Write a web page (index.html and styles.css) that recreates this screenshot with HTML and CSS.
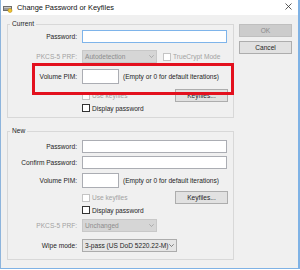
FILE: index.html
```html
<!DOCTYPE html>
<html>
<head>
  <title>Change Password or Keyfiles</title>
  <link rel="stylesheet" href="styles.css">
</head>
<body>
  <div class="window">
    <div class="titlebar">
      <svg class="app-icon" width="10" height="9" viewBox="0 0 10 9">
        <rect x="0.5" y="2.5" width="8" height="4" fill="#9a9a9a" stroke="#6e6e6e"/>
        <rect x="1" y="3" width="7" height="1" fill="#c8c8c8"/>
        <circle cx="7" cy="6.5" r="2" fill="#f2c530" stroke="#b8901c" stroke-width="0.6"/>
      </svg>
      <span class="title">Change Password or Keyfiles</span>
      <svg class="close" width="7" height="7" viewBox="0 0 7 7">
        <path d="M0.5 0.5 L6.5 6.5 M6.5 0.5 L0.5 6.5" stroke="#333" stroke-width="0.8"/>
      </svg>
    </div>

    <div class="client">
      <div class="groups">
        <fieldset class="group group-current">
          <legend>Current</legend>
          <div class="row row-pass">
            <span class="lbl">Password:</span>
            <span class="input input-wide input-focus"></span>
          </div>
          <div class="row row-prf">
            <span class="lbl disabled">PKCS-5 PRF:</span>
            <span class="select select-prf select-disabled">Autodetection
              <svg class="chev" width="5" height="3" viewBox="0 0 5 3"><path d="M0.3 0.3 L2.5 2.5 L4.7 0.3" fill="none" stroke="#9a9a9a" stroke-width="0.7"/></svg>
            </span>
            <span class="check check-disabled check-tc"></span>
            <span class="check-text disabled">TrueCrypt Mode</span>
          </div>
          <div class="row row-pim highlighted">
            <span class="lbl">Volume PIM:</span>
            <span class="input input-pim"></span>
            <span class="pim-note">(Empty or 0 for default iterations)</span>
          </div>
          <div class="row row-keyfiles">
            <span class="lbl"></span>
            <span class="check check-disabled"></span>
            <span class="check-text disabled">Use keyfiles</span>
            <span class="btn btn-keyfiles">Keyfiles...</span>
          </div>
          <div class="row row-display">
            <span class="lbl"></span>
            <span class="check"></span>
            <span class="check-text">Display password</span>
          </div>
        </fieldset>

        <fieldset class="group group-new">
          <legend>New</legend>
          <div class="row row-newpass">
            <span class="lbl">Password:</span>
            <span class="input input-wide"></span>
          </div>
          <div class="row row-confirm">
            <span class="lbl">Confirm Password:</span>
            <span class="input input-wide"></span>
          </div>
          <div class="row row-newpim">
            <span class="lbl">Volume PIM:</span>
            <span class="input input-pim"></span>
            <span class="pim-note">(Empty or 0 for default iterations)</span>
          </div>
          <div class="row row-newkeyfiles">
            <span class="lbl"></span>
            <span class="check check-disabled"></span>
            <span class="check-text disabled">Use keyfiles</span>
            <span class="btn btn-keyfiles">Keyfiles...</span>
          </div>
          <div class="row row-newdisplay">
            <span class="lbl"></span>
            <span class="check"></span>
            <span class="check-text">Display password</span>
          </div>
          <div class="row row-newprf">
            <span class="lbl disabled">PKCS-5 PRF:</span>
            <span class="select select-prf select-disabled">Unchanged
              <svg class="chev" width="5" height="3" viewBox="0 0 5 3"><path d="M0.3 0.3 L2.5 2.5 L4.7 0.3" fill="none" stroke="#9a9a9a" stroke-width="0.7"/></svg>
            </span>
          </div>
          <div class="row row-wipe">
            <span class="lbl">Wipe mode:</span>
            <span class="select select-wipe">3-pass (US DoD 5220.22-M)
              <svg class="chev" width="5" height="3" viewBox="0 0 5 3"><path d="M0.3 0.3 L2.5 2.5 L4.7 0.3" fill="none" stroke="#555" stroke-width="0.7"/></svg>
            </span>
          </div>
        </fieldset>
      </div>

      <div class="buttons">
        <span class="btn btn-side btn-disabled">OK</span>
        <span class="btn btn-side">Cancel</span>
      </div>
    </div>
  </div>
</body>
</html>
```

FILE: styles.css
```css
* {
  box-sizing: border-box;
}

body {
  margin: 0;
  background: #fff;
  font-family: "Liberation Sans", Arial, sans-serif;
  font-size: 6.6px;
  color: #1e1e1e;
}

.window {
  width: 300px;
  height: 269px;
  background: #f0f0f0;
  border-left: 1px solid #8db4dc;
  border-right: 2px solid #7fb2e5;
  border-bottom: 1px solid #7fb2e5;
  display: flex;
  flex-direction: column;
}

.titlebar {
  height: 15px;
  background: #fff;
  display: flex;
  align-items: center;
  flex: none;
}

.app-icon {
  margin-left: 2px;
  margin-top: 1px;
}

.title {
  margin-left: 4px;
  font-size: 7.4px;
  color: #111;
}

.close {
  margin-left: auto;
  margin-right: 6px;
  margin-top: -2px;
}

.client {
  display: flex;
  padding-left: 6px;
}

.groups {
  width: 227px;
  flex: none;
}

.group {
  margin: 5px 0 0 0;
  padding: 0 5px 5px 0;
  border: 1px solid #d8d8d8;
  min-width: 0;
}

.group-new {
  margin-top: 9px;
  padding-bottom: 7px;
}

legend {
  margin-left: 2px;
  padding: 0 2px;
  line-height: 8px;
}

.row {
  display: flex;
  align-items: center;
  height: 13px;
}

.lbl {
  width: 69px;
  margin-right: 5px;
  text-align: right;
  flex: none;
}

.disabled {
  color: #a2a2a2;
}

.input {
  height: 13px;
  background: #fff;
  border: 1px solid #abadb3;
}

.input-wide {
  width: 145px;
}

.input-focus {
  border-color: #7eb4ea;
}

.input-pim {
  width: 37px;
  height: 15px;
}

.pim-note {
  margin-left: 4px;
}

.select {
  height: 13px;
  display: flex;
  align-items: center;
  padding-left: 2px;
  border: 1px solid #acacac;
  background: #e5e5e5;
}

.select .chev {
  margin-left: auto;
  margin-right: 2px;
}

.select-prf {
  width: 75px;
}

.select-wipe {
  width: 95px;
}

.select-disabled {
  background: #d6d6d6;
  border-color: #c8c8c8;
  color: #8d8d8d;
}

.check {
  width: 8px;
  height: 8px;
  background: #fff;
  border: 1px solid #333;
  flex: none;
}

.check-disabled {
  border-color: #c4c4c4;
}

.check-tc {
  margin-left: 6px;
}

.check-text {
  margin-left: 2px;
}

.btn {
  height: 13px;
  display: flex;
  align-items: center;
  justify-content: center;
  background: #e1e1e1;
  border: 1px solid #adadad;
}

.btn-keyfiles {
  width: 53px;
  margin-left: auto;
}

.btn-disabled {
  background: #cccccc;
  border-color: #bfbfbf;
  color: #8a8a8a;
}

.buttons {
  margin-left: 5px;
  padding-top: 9px;
  display: flex;
  flex-direction: column;
  gap: 4px;
}

.btn-side {
  width: 53px;
}

/* current group rows */
.row-pass {
  margin-top: 2px;
}

.row-prf {
  margin-top: 7px;
}

.row-pim {
  margin-top: 6px;
  height: 15px;
}

.row-keyfiles {
  margin-top: 5px;
}

.row-display {
  margin-top: 2px;
  height: 8px;
}

/* new group rows */
.row-newpass {
  margin-top: 5px;
}

.row-confirm {
  margin-top: 3px;
}

.row-newpim {
  margin-top: 4px;
  height: 15px;
}

.row-newkeyfiles {
  margin-top: 3px;
}

.row-newdisplay {
  margin-top: 2px;
  height: 8px;
}

.row-newprf {
  margin-top: 5px;
}

.row-wipe {
  margin-top: 7px;
}

/* red annotation frame drawn over the PIM row */
.highlighted {
  position: relative;
}

.highlighted::after {
  content: "";
  position: absolute;
  left: 24px;
  top: -6px;
  width: 196px;
  height: 26px;
  border: 3px solid #e3101e;
}
```
